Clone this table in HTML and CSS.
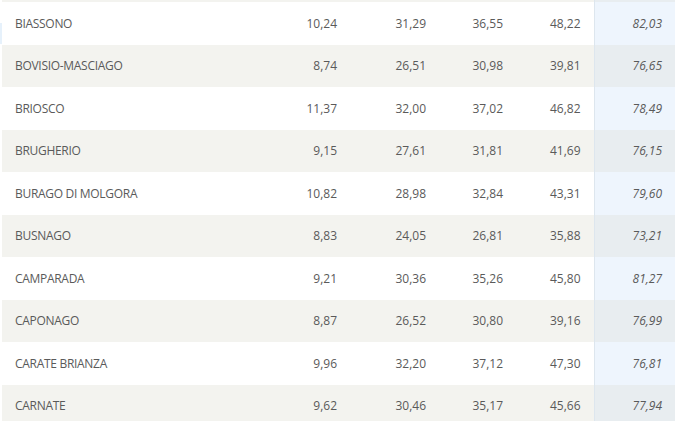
FILE: index.html
```html
<!DOCTYPE html>
<html lang="it">
<head>
<meta charset="utf-8">
<link rel="stylesheet" href="styles.css">
</head>
<body>
<div class="page">
  <span class="edge-mark"></span>
  <table class="data">
    <colgroup>
      <col class="c-name"><col class="c-a"><col class="c-b"><col class="c-c"><col class="c-d"><col class="c-e">
    </colgroup>
    <tbody>
      <tr class="odd filler"><td class="name"></td><td></td><td></td><td></td><td></td><td class="last"></td></tr>
      <tr><td class="name">BIASSONO</td><td>10,24</td><td>31,29</td><td>36,55</td><td>48,22</td><td class="last">82,03</td></tr>
      <tr class="odd"><td class="name">BOVISIO-MASCIAGO</td><td>8,74</td><td>26,51</td><td>30,98</td><td>39,81</td><td class="last">76,65</td></tr>
      <tr><td class="name">BRIOSCO</td><td>11,37</td><td>32,00</td><td>37,02</td><td>46,82</td><td class="last">78,49</td></tr>
      <tr class="odd"><td class="name">BRUGHERIO</td><td>9,15</td><td>27,61</td><td>31,81</td><td>41,69</td><td class="last">76,15</td></tr>
      <tr><td class="name">BURAGO DI MOLGORA</td><td>10,82</td><td>28,98</td><td>32,84</td><td>43,31</td><td class="last">79,60</td></tr>
      <tr class="odd"><td class="name">BUSNAGO</td><td>8,83</td><td>24,05</td><td>26,81</td><td>35,88</td><td class="last">73,21</td></tr>
      <tr><td class="name">CAMPARADA</td><td>9,21</td><td>30,36</td><td>35,26</td><td>45,80</td><td class="last">81,27</td></tr>
      <tr class="odd"><td class="name">CAPONAGO</td><td>8,87</td><td>26,52</td><td>30,80</td><td>39,16</td><td class="last">76,99</td></tr>
      <tr><td class="name">CARATE BRIANZA</td><td>9,96</td><td>32,20</td><td>37,12</td><td>47,30</td><td class="last">76,81</td></tr>
      <tr class="odd"><td class="name">CARNATE</td><td>9,62</td><td>30,46</td><td>35,17</td><td>45,66</td><td class="last">77,94</td></tr>
    </tbody>
  </table>
</div>
</body>
</html>
```
FILE: styles.css
```css
html, body {
  margin: 0;
  padding: 0;
  background: #ffffff;
  overflow: hidden;
}
.page {
  position: relative;
  padding-left: 2px;
  width: 673px;
}
.edge-mark {
  position: absolute;
  left: 0;
  top: 23px;
  width: 2px;
  height: 21px;
  background: #e6f1fb;
}
.data {
  border-collapse: collapse;
  table-layout: fixed;
  width: 673px;
  font-family: "Open Sans", "Liberation Sans", sans-serif;
  font-size: 12px;
  color: #5a5a5a;
}
.c-name { width: 268px; }
.c-a { width: 80px; }
.c-b { width: 89px; }
.c-c { width: 77px; }
.c-d { width: 78px; }
.c-e { width: 81px; }
.data tr { height: 42.5px; }
.data tr.filler { height: 2px; }
.data tr.filler td { height: 2px; padding: 0; line-height: 0; }
.data td {
  padding: 0 13px 0 0;
  text-align: right;
  vertical-align: middle;
  white-space: nowrap;
}
.data td.name {
  text-align: left;
  padding-left: 13px;
  letter-spacing: -0.3px;
}
.data tr.odd td { background: #f3f3ef; }
.data td.last {
  font-style: italic;
  background: #eef5fd;
  border-left: 1px solid #dde6ee;
}
.data tr.odd td.last { background: #e8edf0; }
```
